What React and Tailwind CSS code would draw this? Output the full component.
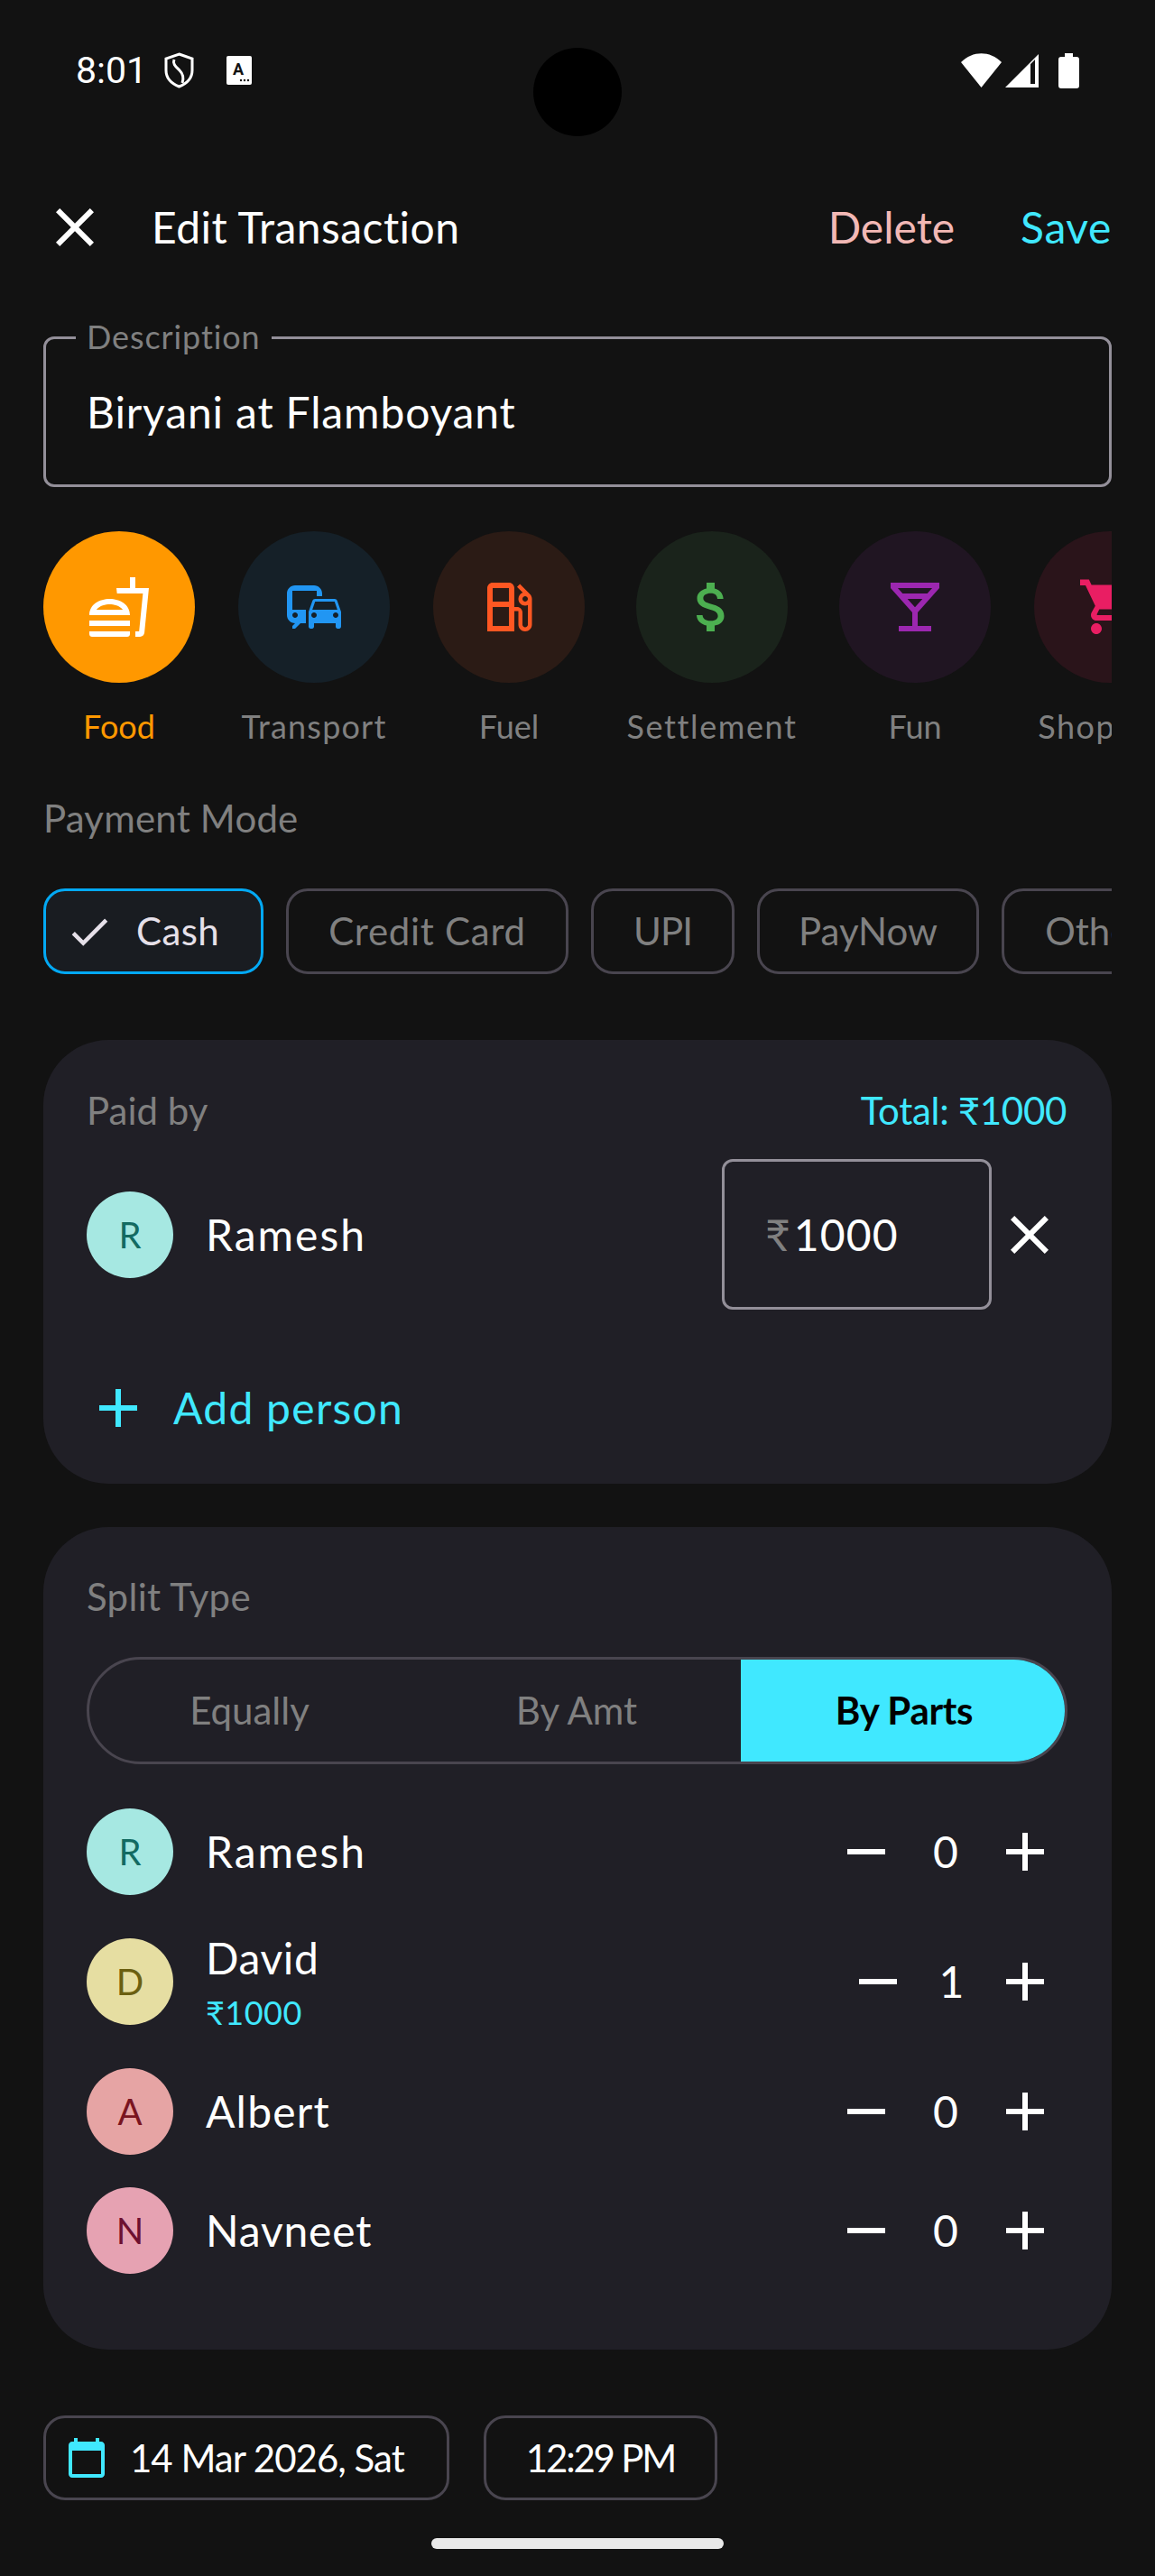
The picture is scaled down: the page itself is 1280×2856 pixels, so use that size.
import React from 'react';

const P = {
  close: 'M19 6.41L17.59 5 12 10.59 6.41 5 5 6.41 10.59 12 5 17.59 6.41 19 12 13.41 17.59 19 19 17.59 13.41 12z',
  plus: 'M19 13h-6v6h-2v-6H5v-2h6V5h2v6h6v2z',
  minus: 'M19 13H5v-2h14v2z',
  check: 'M9 16.17L4.83 12l-1.42 1.41L9 19 21 7l-1.41-1.41z',
  calendar: 'M20 3h-1V1h-2v2H7V1H5v2H4c-1.1 0-2 .9-2 2v16c0 1.1.9 2 2 2h16c1.1 0 2-.9 2-2V5c0-1.1-.9-2-2-2zm0 18H4V8h16v13z',
  food: 'M1 21.98c0 .56.45 1.01 1.01 1.01H15c.56 0 1.01-.45 1.01-1.01V21H1v.98zM8.5 8.99C4.75 8.99 1 11 1 15h15c0-4-3.75-6.01-7.5-6.01zM3.62 13c1.11-1.55 3.47-2.01 4.88-2.01s3.77.46 4.88 2.01H3.62zM1 17h15v2H1zM18 5V1h-2v4h-5l.23 2h9.56l-1.4 14H18v2h1.72c.84 0 1.53-.65 1.63-1.47L23 5h-5z',
  commute: 'M12 4H5C3.34 4 2 5.34 2 7v8c0 1.66 1.34 3 3 3l-1 1v1h1l2-2.03L9 18v-5H4V5.98L13 6v2h2V7c0-1.66-1.34-3-3-3zM5 14c.55 0 1 .45 1 1s-.45 1-1 1-1-.45-1-1 .45-1 1-1zm15.57-4.34c-.14-.4-.52-.66-.97-.66h-7.19c-.46 0-.83.26-.98.66L10 13.77l.01 5.51c0 .38.31.72.69.72h.62c.38 0 .68-.38.68-.76V18h8v1.24c0 .38.31.76.69.76h.61c.38 0 .69-.34.69-.72l.01-1.37v-4.14l-1.43-4.11zm-8.16.34h7.19l1.03 3h-9.25l1.03-3zM12 16c-.55 0-1-.45-1-1s.45-1 1-1 1 .45 1 1-.45 1-1 1zm8 0c-.55 0-1-.45-1-1s.45-1 1-1 1 .45 1 1-.45 1-1 1z',
  fuel: 'M19.77 7.23l.01-.01-3.72-3.72L15 4.56l2.11 2.11c-.94.36-1.61 1.26-1.61 2.33 0 1.38 1.12 2.5 2.5 2.5.36 0 .69-.08 1-.21v7.21c0 .55-.45 1-1 1s-1-.45-1-1V14c0-1.1-.9-2-2-2h-1V5c0-1.1-.9-2-2-2H6c-1.1 0-2 .9-2 2v16h10v-7.5h1.5v5c0 1.38 1.12 2.5 2.5 2.5s2.5-1.12 2.5-2.5V9c0-.69-.28-1.32-.73-1.77zM12 13.5V19H6v-7h6v1.5zm0-3.5H6V5h6v5zm6 0c-.55 0-1-.45-1-1s.45-1 1-1 1 .45 1 1-.45 1-1 1z',
  money: 'M11.8 10.9c-2.27-.59-3-1.2-3-2.15 0-1.09 1.01-1.85 2.7-1.85 1.78 0 2.44.85 2.5 2.1h2.21c-.07-1.72-1.12-3.3-3.21-3.81V3h-3v2.16c-1.94.42-3.5 1.68-3.5 3.61 0 2.31 1.91 3.46 4.7 4.13 2.5.6 3 1.48 3 2.41 0 .69-.49 1.79-2.7 1.79-2.06 0-2.87-.92-2.98-2.1h-2.2c.12 2.19 1.76 3.42 3.68 3.83V21h3v-2.15c1.95-.37 3.5-1.5 3.5-3.55 0-2.84-2.43-3.81-4.7-4.4z',
  bar: 'M14.77 9L12 12.11 9.23 9h5.54M21 3H3v2l8 9v5H6v2h12v-2h-5v-5l8-9V3zM5.66 5h12.68l-1.78 2H7.43L5.66 5z',
  cart: 'M7 18c-1.1 0-1.99.9-1.99 2S5.9 22 7 22s2-.9 2-2-.9-2-2-2zM1 2v2h2l3.6 7.59-1.35 2.45c-.16.28-.25.61-.25.96 0 1.1.9 2 2 2h12v-2H7.42c-.14 0-.25-.11-.25-.25l.03-.12.9-1.83h7.45c.75 0 1.41-.41 1.75-1.03l3.58-6.47c.08-.14.12-.31.12-.48 0-.55-.45-1-1-1H5.21l-.94-2H1zm16 16c-1.1 0-1.99.9-1.99 2s.89 2 1.99 2 2-.9 2-2-.9-2-2-2z',
};

function Icon({ d, className }) {
  return (
    <svg viewBox="0 0 24 24" fill="currentColor" className={className}>
      <path d={d} />
    </svg>
  );
}

const categories = [
  { label: 'Food', icon: P.food, circle: 'bg-[#ff9800] text-white', text: 'text-[#ff9800]', w: 'w-[168px]' },
  { label: 'Transport', icon: P.commute, circle: 'bg-[#152028] text-[#2196f3]', text: 'text-[#808080] tracking-[1.2px]', w: 'w-[168px]' },
  { label: 'Fuel', icon: P.fuel, circle: 'bg-[#2b1b15] text-[#ff5722]', text: 'text-[#808080]', w: 'w-[168px]' },
  { label: 'Settlement', icon: P.money, circle: 'bg-[#1a231b] text-[#4caf50]', text: 'text-[#808080] tracking-[1.6px]', w: 'w-[186px]' },
  { label: 'Fun', icon: P.bar, circle: 'bg-[#201522] text-[#9c27b0]', text: 'text-[#808080]', w: 'w-[168px]' },
  { label: 'Shopping', icon: P.cart, circle: 'bg-[#2a141a] text-[#e91e63]', text: 'text-[#808080] tracking-[1.5px]', w: 'w-[168px]' },
];

const people = [
  { name: 'Ramesh', initial: 'R', bg: 'bg-[#a6e8e2]', fg: 'text-[#136b62]', parts: 0, track: 'tracking-[2px]' },
  { name: 'David', initial: 'D', bg: 'bg-[#e6dea2]', fg: 'text-[#6b5f10]', parts: 1, sub: '₹1000', track: 'tracking-[0.6px]' },
  { name: 'Albert', initial: 'A', bg: 'bg-[#e6a4a4]', fg: 'text-[#7a1420]', parts: 0, track: 'tracking-[1.2px]' },
  { name: 'Navneet', initial: 'N', bg: 'bg-[#e6a2b2]', fg: 'text-[#6e1030]', parts: 0, track: 'tracking-[0.8px]' },
];

function Avatar({ person }) {
  return (
    <div className={`w-[96px] h-[96px] shrink-0 rounded-full flex items-center justify-center text-[40px] ${person.bg} ${person.fg}`}>
      {person.initial}
    </div>
  );
}

function StatusBar() {
  return (
    <div className="relative h-[204px] shrink-0">
      <div className="flex items-center pl-[84px] pr-[84px] pt-[58px] h-[98px]">
        <span className="text-[41px] text-white leading-none [font-family:Roboto,sans-serif] w-[98px]">8:01</span>
        <svg viewBox="0 0 33 40" className="w-[33px] h-[40px] text-white" fill="none" stroke="currentColor" strokeWidth="3">
          <path d="M16.5 2 L31 7 V20 C31 29 24 35 16.5 38 C9 35 2 29 2 20 V7 Z" />
          <path d="M11 8 C9 13 13 16 17 20 C21 24 22 28 20 34" />
        </svg>
        <svg viewBox="0 0 28 32" className="ml-[36px] w-[28px] h-[32px]">
          <rect width="28" height="32" rx="2" fill="#fff" />
          <text x="13" y="21" textAnchor="middle" fontSize="18" fontWeight="700" fill="#121212" fontFamily="Roboto, sans-serif">A</text>
          <circle cx="16" cy="27" r="1.2" fill="#121212" />
          <circle cx="20" cy="27" r="1.2" fill="#121212" />
          <circle cx="24" cy="27" r="1.2" fill="#121212" />
        </svg>
        <div className="ml-auto flex items-center">
          <svg viewBox="0 0 45 38" className="w-[45px] h-[38px]">
            <path d="M0 10 C13 -3 32 -3 45 10 L22.5 38 Z" fill="#fff" />
          </svg>
          <svg viewBox="0 0 37 37" className="ml-[4px] w-[37px] h-[37px]">
            <path fillRule="evenodd" d="M37 0 V37 H0 Z M28 11 V33 H33 V6 Z" fill="#fff" />
          </svg>
          <svg viewBox="0 0 23 39" className="ml-[22px] w-[23px] h-[39px]">
            <path d="M7 0 H16 V4 H20 C22 4 23 5 23 7 V36 C23 38 22 39 20 39 H3 C1 39 0 38 0 36 V7 C0 5 1 4 3 4 H7 Z" fill="#fff" />
          </svg>
        </div>
      </div>
      <div className="absolute left-[591px] top-[53px] w-[98px] h-[98px] rounded-full bg-black" />
    </div>
  );
}

function Stepper({ value }) {
  return (
    <div className="flex items-center text-white">
      <div className="w-[96px] h-[96px] flex items-center justify-center"><Icon d={P.minus} className="w-[72px] h-[72px]" /></div>
      <span className={`text-center text-[48px] leading-none ${value === 1 ? 'w-[67px]' : 'w-[80px]'}`}>{value}</span>
      <div className="w-[96px] h-[96px] flex items-center justify-center"><Icon d={P.plus} className="w-[72px] h-[72px]" /></div>
    </div>
  );
}

export default function App() {
  return (
    <div className="w-[1280px] h-[2856px] bg-[#121212] overflow-hidden flex flex-col [font-family:Lato,sans-serif]">
      <StatusBar />

      {/* Header */}
      <div className="h-[96px] flex items-center pl-[48px] pr-[48px] shrink-0">
        <Icon d={P.close} className="w-[72px] h-[72px] text-white -ml-[1px]" />
        <span className="ml-[49px] text-[48px] text-white leading-none tracking-[0.45px]">Edit Transaction</span>
        <span className="ml-auto text-[48px] text-[#f2b8b5] leading-none">Delete</span>
        <span className="ml-[73px] text-[48px] text-[#40e8ff] leading-none tracking-[0.6px]">Save</span>
      </div>

      {/* Description */}
      <div className="relative mx-[48px] mt-[73px] h-[167px] shrink-0 rounded-[12px] border-[3px] border-[#938f99] flex items-center pl-[45px]">
        <span className="text-[48px] text-white leading-none tracking-[0.85px]">Biryani at Flamboyant</span>
        <span className="absolute left-[33px] -top-[21px] px-[12px] bg-[#121212] text-[36px] text-[#808080] leading-none tracking-[0.9px]">Description</span>
      </div>

      {/* Categories */}
      <div className="mx-[48px] mt-[49px] flex gap-12 overflow-hidden shrink-0">
        {categories.map((c) => (
          <div key={c.label} className={`${c.w} shrink-0 flex flex-col items-center`}>
            <div className={`w-[168px] h-[168px] rounded-full flex items-center justify-center ${c.circle}`}>
              <Icon d={c.icon} className="w-[72px] h-[72px]" />
            </div>
            <span className={`mt-[26px] text-[36px] leading-[44px] whitespace-nowrap ${c.text}`}>{c.label}</span>
          </div>
        ))}
      </div>

      {/* Payment mode */}
      <div className="ml-[48px] mt-[55px] text-[42px] leading-[50px] text-[#808080] tracking-[0.2px] shrink-0">Payment Mode</div>
      <div className="mx-[48px] mt-[53px] flex gap-[25px] overflow-hidden shrink-0 text-[42px] text-[#808080]">
        <div className="h-[95px] w-[244px] shrink-0 rounded-[24px] border-[3px] border-[#03a9f4] bg-[#191c21] flex items-center pl-[21px]">
          <Icon d={P.check} className="w-[54px] h-[54px] text-[#e6e0e9]" />
          <span className="ml-[25px] text-[#e6e0e9] tracking-[0.4px]">Cash</span>
        </div>
        <div className="h-[95px] w-[313px] shrink-0 rounded-[24px] border-[3px] border-[#49454f] flex items-center justify-center tracking-[0.7px]">Credit Card</div>
        <div className="h-[95px] w-[159px] shrink-0 rounded-[24px] border-[3px] border-[#49454f] flex items-center justify-center tracking-[-1px]">UPI</div>
        <div className="h-[95px] w-[246px] shrink-0 rounded-[24px] border-[3px] border-[#49454f] flex items-center justify-center">PayNow</div>
        <div className="h-[95px] w-[206px] shrink-0 rounded-[24px] border-[3px] border-[#49454f] flex items-center justify-center">Other</div>
      </div>

      {/* Paid by */}
      <div className="mx-[48px] mt-[73px] h-[492px] shrink-0 rounded-[72px] bg-[#201f26] px-[48px] pt-[52px]">
        <div className="flex justify-between items-center h-[52px] text-[42px]">
          <span className="text-[#808080]">Paid by</span>
          <span className="text-[#40e8ff] mr-[2px] tracking-[-0.3px]">Total: ₹1000</span>
        </div>
        <div className="mt-[28px] flex items-center h-[167px]">
          <Avatar person={people[0]} />
          <span className="ml-[36px] text-[48px] text-white tracking-[2px]">Ramesh</span>
          <div className="ml-auto w-[299px] h-[167px] rounded-[12px] border-[3px] border-[#938f99] flex items-center pl-[45px]">
            <span className="text-[48px] text-[#808080]">₹</span>
            <span className="ml-[4px] text-[48px] text-white tracking-[1.2px]">1000</span>
          </div>
          <Icon d={P.close} className="ml-[6px] mr-[7px] w-[72px] h-[72px] text-white" />
        </div>
        <div className="mt-[73px] flex items-center h-[72px] text-[#40e8ff]">
          <Icon d={P.plus} className="w-[72px] h-[72px] ml-[-1px]" />
          <span className="ml-[25px] text-[48px] tracking-[1.27px]">Add person</span>
        </div>
      </div>

      {/* Split type */}
      <div className="mx-[48px] mt-[48px] h-[912px] shrink-0 rounded-[72px] bg-[#201f26] px-[48px] pt-[51px]">
        <div className="h-[52px] flex items-center text-[42px] text-[#808080] tracking-[0.3px]">Split Type</div>
        <div className="mt-[41px] h-[119px] w-[1087px] rounded-full border-[3px] border-[#49454f] flex overflow-hidden text-[42px]">
          <div className="w-[361px] pr-[6px] flex items-center justify-center text-[#808080]">Equally</div>
          <div className="w-[361px] pr-[3px] flex items-center justify-center text-[#808080]">By Amt</div>
          <div className="flex-1 pl-[3px] flex items-center justify-center bg-[#40e8ff] text-black font-bold tracking-[-0.3px]">By Parts</div>
        </div>
        <div className="mt-[49px] flex flex-col">
          {people.map((p, i) => (
            <div key={p.name} className={`flex items-center h-[96px] ${i === 1 ? 'my-[48px]' : i === 3 ? 'mt-[36px]' : ''}`}>
              <Avatar person={p} />
              <div className="ml-[36px] flex flex-col">
                <span className={`text-[48px] text-white leading-[60px] ${p.track}`}>{p.name}</span>
                {p.sub && <span className="mt-[8px] text-[36px] text-[#40e8ff] leading-[44px] tracking-[0.5px]">{p.sub}</span>}
              </div>
              <div className="ml-auto"><Stepper value={p.parts} /></div>
            </div>
          ))}
        </div>
      </div>

      {/* Date and time */}
      <div className="mx-[48px] mt-[73px] flex gap-[38px] shrink-0 text-[42px] text-white">
        <div className="w-[450px] h-[94px] rounded-[24px] border-[3px] border-[#49454f] flex items-center pl-[21px]">
          <Icon d={P.calendar} className="w-[48px] h-[48px] text-[#40e8ff]" />
          <span className="ml-[24px] tracking-[-1px]">14 Mar 2026, Sat</span>
        </div>
        <div className="w-[259px] h-[94px] rounded-[24px] border-[3px] border-[#49454f] flex items-center justify-center tracking-[-2.2px]">12:29 PM</div>
      </div>

      {/* Home pill */}
      <div className="mx-auto mt-[42px] w-[324px] h-[12px] rounded-[6px] bg-[#e8e8e8] shrink-0" />
    </div>
  );
}
